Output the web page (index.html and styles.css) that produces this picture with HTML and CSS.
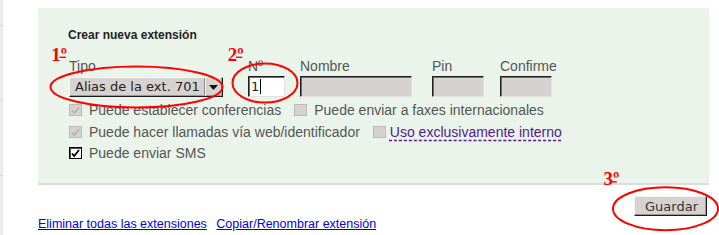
FILE: index.html
```html
<!DOCTYPE html>
<html lang="es">
<head>
<meta charset="utf-8">
<title>Crear nueva extensión</title>
<link rel="stylesheet" href="styles.css">
</head>
<body>
<div class="page">
  <div class="edge"></div>
  <div class="main">
    <div class="panel">
      <div class="title">Crear nueva extensión</div>
      <div class="fields">
        <div class="field f-tipo">
          <label class="flabel">Tipo</label>
          <div class="select"><span class="sel-text">Alias de la ext. 701</span><span class="sel-btn"><svg width="9" height="5" viewBox="0 0 9 5"><path d="M0 0H9L4.5 5Z" fill="#111"/></svg></span></div>
        </div>
        <div class="field f-num">
          <label class="flabel">Nº</label>
          <div class="input num"><span class="val">1</span><span class="caret"></span></div>
        </div>
        <div class="field f-nombre">
          <label class="flabel">Nombre</label>
          <div class="input off"></div>
        </div>
        <div class="field f-pin">
          <label class="flabel">Pin</label>
          <div class="input off"></div>
        </div>
        <div class="field f-conf">
          <label class="flabel">Confirme</label>
          <div class="input off"></div>
        </div>
      </div>
      <div class="checks">
        <div class="row"><span class="cb dis"><svg width="11" height="11" viewBox="0 0 11 11"><path d="M2 5.5L4.2 8L9 2.5" fill="none" stroke="#b3b0ad" stroke-width="1.8"/></svg></span><span class="lbl">Puede establecer conferencias</span><span class="cb dis second"></span><span class="lbl">Puede enviar a faxes internacionales</span></div>
        <div class="row"><span class="cb dis"><svg width="11" height="11" viewBox="0 0 11 11"><path d="M2 5.5L4.2 8L9 2.5" fill="none" stroke="#b3b0ad" stroke-width="1.8"/></svg></span><span class="lbl">Puede hacer llamadas vía web/identificador</span><span class="cb dis second"></span><a class="intlink" href="#">Uso exclusivamente interno</a></div>
        <div class="row"><span class="cb on"><svg width="11" height="11" viewBox="0 0 11 11"><path d="M2 5.5L4.2 8L9 2" fill="none" stroke="#000" stroke-width="1.8"/></svg></span><span class="lbl">Puede enviar SMS</span></div>
      </div>
    </div>
    <div class="actions"><button class="btn" type="button">Guardar</button></div>
    <div class="links"><a href="#">Eliminar todas las extensiones</a><a href="#">Copiar/Renombrar extensión</a></div>
  </div>
  <svg class="annot" width="719" height="235" viewBox="0 0 719 235">
    <g fill="none" stroke="#f00" stroke-width="2">
      <ellipse cx="136.5" cy="87" rx="86" ry="20.5"/>
      <ellipse cx="265" cy="83" rx="32.5" ry="19.5"/>
      <ellipse cx="665.5" cy="208.7" rx="52.5" ry="21.5"/>
    </g>
    <g fill="none" stroke="#f00" stroke-width="1.4">
      <line x1="59.5" y1="57.3" x2="65.8" y2="57.3"/>
      <line x1="236" y1="57.3" x2="242.3" y2="57.3"/>
      <line x1="610.5" y1="181.8" x2="616.8" y2="181.8"/>
    </g>
    <g class="num-t" fill="#f00">
      <text x="51.3" y="60.5">1º</text>
      <text x="227.8" y="60.5">2º</text>
      <text x="603.5" y="185">3º</text>
    </g>
  </svg>
</div>
</body>
</html>
```
FILE: styles.css
```css
html, body {
  margin: 0;
  padding: 0;
  background: #fff;
}
body {
  width: 719px;
  height: 235px;
  overflow: hidden;
  font-family: "Liberation Sans", Arial, sans-serif;
}
.page {
  position: relative;
  display: flex;
  width: 719px;
  height: 235px;
}
.edge {
  flex: none;
  width: 3px;
  height: 235px;
  background: repeating-linear-gradient(to bottom, #ececec 0 25px, #dadada 25px 26px, #ececec 26px 75px);
}
.main {
  flex: none;
  width: 671px;
  padding: 8px 0 0 35px;
}
.panel {
  box-sizing: border-box;
  height: 177px;
  background: #eaf4eb;
  border-bottom: 2px solid #dcdcdc;
  padding: 20px 0 0 31px;
}
.title {
  margin-left: -1px;
  font-weight: bold;
  font-size: 12px;
  line-height: 14px;
  color: #222;
}
.fields {
  display: flex;
  margin-top: 16px;
}
.field {
  display: flex;
  flex-direction: column;
}
.flabel {
  font-size: 14px;
  line-height: 16px;
  color: #555;
  margin-bottom: 2px;
}
.f-tipo { width: 154px; }
.f-num { width: 37px; margin-left: 25px; }
.f-nombre { width: 112px; margin-left: 15px; }
.f-pin { width: 52px; margin-left: 20px; }
.f-conf { width: 52px; margin-left: 16px; }

.select {
  box-sizing: border-box;
  display: flex;
  height: 20px;
  margin-top: 1px;
  background: #d6d2cf;
  border: 1px solid;
  border-color: #f6f6f6 #1a1a1a #1a1a1a #f6f6f6;
  box-shadow: inset -1px -1px 0 #9a9794;
}
.sel-text {
  flex: 1;
  padding-left: 5px;
  font-family: "DejaVu Sans", sans-serif;
  font-size: 13px;
  line-height: 18px;
  color: #222;
  white-space: nowrap;
}
.sel-btn {
  flex: none;
  width: 16px;
  display: flex;
  align-items: center;
  justify-content: center;
  border-left: 1px solid #8c8986;
  box-shadow: inset 1px 0 0 #f6f6f6;
  margin-right: 1px;
}
.input {
  box-sizing: border-box;
  height: 21px;
  border: 1px solid;
  border-color: #1e1e1e #e4e2e0 #e4e2e0 #1e1e1e;
  box-shadow: inset 1px 1px 0 #6e6c6a;
}
.input.num {
  background: #fff;
  display: flex;
  align-items: center;
  padding-left: 2px;
}
.input.off {
  background: #d6d2cf;
}
.val {
  font-family: "DejaVu Sans", sans-serif;
  font-size: 13px;
  line-height: 16px;
  color: #222;
}
.caret {
  width: 1px;
  height: 15px;
  background: #000;
  margin-left: 1px;
}

.checks {
  margin-top: 3px;
}
.row {
  font-size: 14px;
  line-height: 21.5px;
  color: #555;
  white-space: nowrap;
}
.cb {
  box-sizing: border-box;
  display: inline-block;
  width: 13px;
  height: 12px;
  vertical-align: -1px;
  margin-right: 7px;
  position: relative;
}
.cb svg {
  display: block;
}
.cb.dis {
  background: #d6d2cf;
  border: 1px solid #bdbab7;
}
.cb.on {
  background: #fff;
  border: 1px solid #000;
  box-shadow: inset 1px 1px 0 #555;
}
.cb.second {
  margin-left: 13px;
}
.intlink {
  margin-left: -3px;
  color: #551a8b;
  text-decoration: underline dashed #551a8b;
  text-underline-offset: 3px;
}

.actions {
  display: flex;
  justify-content: flex-end;
  margin-top: 11px;
  padding-right: 2px;
}
.btn {
  box-sizing: border-box;
  height: 20px;
  width: 73px;
  padding: 0 0 0 2px;
  background: #d6d2cf;
  border: 1px solid;
  border-color: #f4f4f4 #1a1a1a #1a1a1a #f4f4f4;
  box-shadow: inset -1px -1px 0 #9a9794;
  font-family: "DejaVu Sans", sans-serif;
  font-size: 13px;
  line-height: 17px;
  color: #333;
}
.links {
  display: flex;
  gap: 9.5px;
  margin-top: 1px;
  font-size: 12.5px;
  line-height: 15px;
}
.links a {
  color: #0000ee;
  text-decoration: underline;
}

.annot {
  position: absolute;
  left: 0;
  top: 0;
  pointer-events: none;
}
.num-t {
  font-family: "Liberation Serif", "Times New Roman", serif;
  font-weight: bold;
  font-size: 19px;
}
```
